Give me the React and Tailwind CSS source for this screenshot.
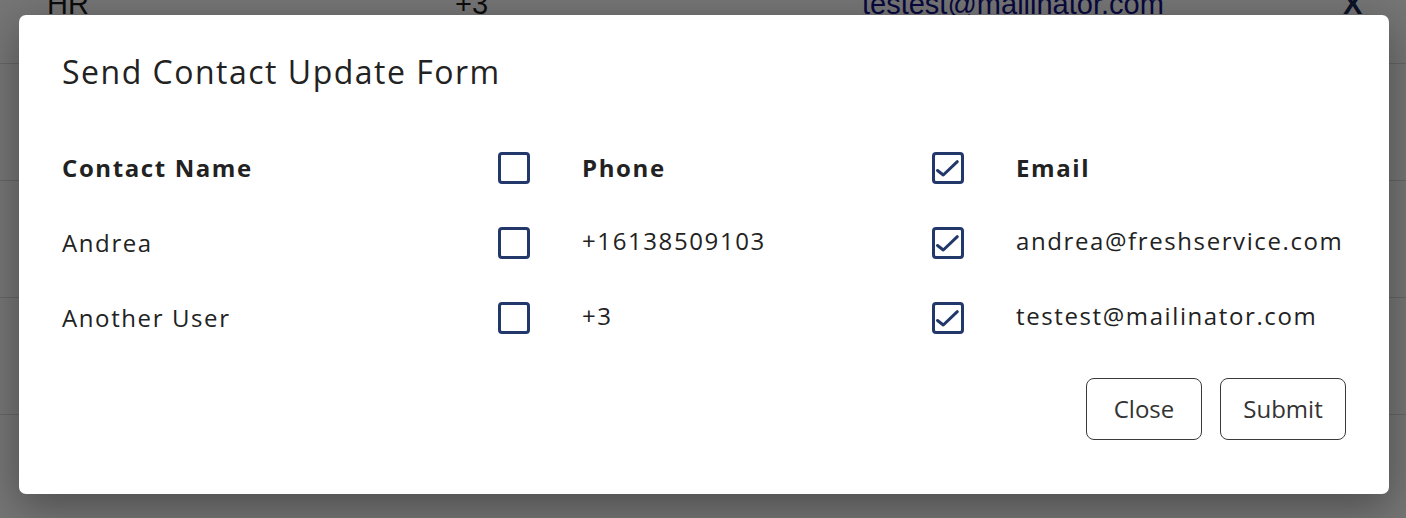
import React, { useState } from 'react';

const contacts = [
  { id: 1, name: 'Andrea', phone: '+16138509103', email: 'andrea@freshservice.com' },
  { id: 2, name: 'Another User', phone: '+3', email: 'testest@mailinator.com' },
];

const Checkbox = ({ checked, onChange }) => (
  <button
    type="button"
    onClick={onChange}
    className="w-8 h-8 border-[3px] border-[#22386b] rounded-[4px] bg-white flex items-center justify-center p-0"
  >
    {checked && (
      <svg width="26" height="26" viewBox="0 0 26 26" fill="none">
        <path
          d="M2.5 15.5 L8.3 20 L22.3 6.7"
          stroke="#22386b"
          strokeWidth="3"
          strokeLinecap="round"
          strokeLinejoin="round"
        />
      </svg>
    )}
  </button>
);

const App = () => {
  const [phoneAll, setPhoneAll] = useState(false);
  const [emailAll, setEmailAll] = useState(true);
  const [phones, setPhones] = useState({ 1: false, 2: false });
  const [emails, setEmails] = useState({ 1: true, 2: true });

  return (
    <div className="relative h-[518px] w-[1406px] overflow-hidden bg-white font-['Open_Sans',sans-serif]">
      {/* page behind the modal */}
      <div className="-mt-[53px] font-['Liberation_Sans',sans-serif] text-[29px] text-[#1c1c1c]">
        <div className="h-[117px] border-b border-[#dcdcdc] flex items-center">
          <span className="w-[455px] pl-[47px]">HR</span>
          <span className="w-[407px]">+3</span>
          <span className="w-[481px] text-[#12128a]">testest@mailinator.com</span>
          <span className="text-[#1a2a55] font-bold">X</span>
        </div>
        <div className="h-[117px] border-b border-[#dcdcdc]" />
        <div className="h-[117px] border-b border-[#dcdcdc]" />
        <div className="h-[117px] border-b border-[#dcdcdc]" />
      </div>

      {/* overlay */}
      <div className="absolute inset-0 bg-[rgba(0,0,0,0.54)] pl-[19px] pt-[15px]">
        <div className="w-[1370px] bg-white rounded-[7px] shadow-[0_12px_40px_rgba(0,0,0,0.35)] pl-[43px] pr-[43px] pt-[37px] pb-[54px] text-[#222]">
          <h2 className="text-[32px] leading-[40px] font-normal tracking-[1.5px]">Send Contact Update Form</h2>

          <div className="mt-[38px] text-[24px] tracking-[1.6px]">
            <div className="h-[75px] grid grid-cols-[436px_84px_350px_84px_1fr] items-center font-bold">
              <span>Contact Name</span>
              <Checkbox checked={phoneAll} onChange={() => setPhoneAll(!phoneAll)} />
              <span>Phone</span>
              <Checkbox checked={emailAll} onChange={() => setEmailAll(!emailAll)} />
              <span>Email</span>
            </div>
            {contacts.map((c) => (
              <div
                key={c.id}
                className="h-[75px] grid grid-cols-[436px_84px_350px_84px_1fr] items-center"
              >
                <span>{c.name}</span>
                <Checkbox
                  checked={phones[c.id]}
                  onChange={() => setPhones({ ...phones, [c.id]: !phones[c.id] })}
                />
                <span className="-mt-[3px]">{c.phone}</span>
                <Checkbox
                  checked={emails[c.id]}
                  onChange={() => setEmails({ ...emails, [c.id]: !emails[c.id] })}
                />
                <span className="-mt-[3px] whitespace-nowrap">{c.email}</span>
              </div>
            ))}
          </div>

          <div className="mt-[23px] flex justify-end gap-[18px]">
            <button className="w-[116px] h-[62px] border border-[#3a3a3a] rounded-[8px] text-[24px] text-[#333]">
              Close
            </button>
            <button className="w-[126px] h-[62px] border border-[#3a3a3a] rounded-[8px] text-[24px] text-[#333]">
              Submit
            </button>
          </div>
        </div>
      </div>
    </div>
  );
};

export default App;
